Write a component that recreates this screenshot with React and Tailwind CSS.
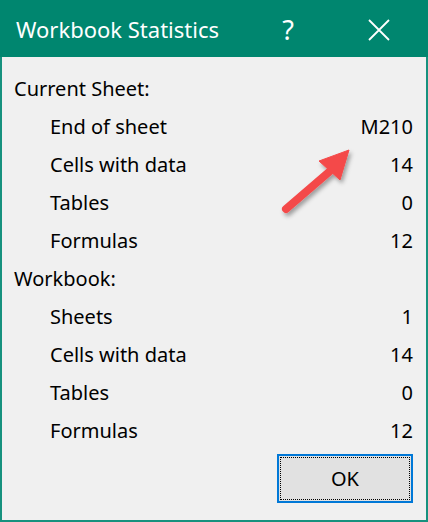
export default function App() {
  const font = { fontFamily: '"Noto Sans", "Open Sans", sans-serif' };
  const Header = ({ children }) => (
    <div className="h-[38px] flex items-center pl-[12px] text-[20px] text-black">{children}</div>
  );
  const Item = ({ label, value }) => (
    <div className="h-[38px] flex items-center justify-between pl-[48px] text-[20px] text-black">
      <span>{label}</span>
      <span>{value}</span>
    </div>
  );
  return (
    <div className="w-[428px] h-[522px] relative border-2 border-[#16917e] bg-[#f0f0f0] flex flex-col" style={font}>
      <div className="h-[55px] -mx-[2px] -mt-[2px] pt-[2px] box-content bg-[#00866f] flex items-center text-white">
        <span className="pl-[16px] text-[22px] flex-1">Workbook Statistics</span>
        <span className="w-[24px] text-center text-[27px] leading-none mr-[68px]">?</span>
        <svg width="22" height="22" viewBox="0 0 22 22" className="mr-[38px]">
          <path d="M1 1 L21 21 M21 1 L1 21" stroke="white" strokeWidth="1.8" />
        </svg>
      </div>
      <div className="flex flex-col pt-[13px] pr-[13px]">
        <Header>Current Sheet:</Header>
        <Item label="End of sheet" value="M210" />
        <Item label="Cells with data" value="14" />
        <Item label="Tables" value="0" />
        <Item label="Formulas" value="12" />
        <Header>Workbook:</Header>
        <Item label="Sheets" value="1" />
        <Item label="Cells with data" value="14" />
        <Item label="Tables" value="0" />
        <Item label="Formulas" value="12" />
        <div className="flex justify-end mt-[4px]">
          <button className="w-[136px] h-[49px] border-2 border-[#0078d7] bg-[#e1e1e1] p-[1px] text-[20px] text-black">
            <div className="w-full h-full border border-dotted border-black flex items-center justify-center">OK</div>
          </button>
        </div>
      </div>
      <svg className="absolute left-0 top-0 pointer-events-none" width="428" height="522" viewBox="0 0 428 522">
        <defs>
          <filter id="sh" x="-20%" y="-20%" width="140%" height="140%">
            <feDropShadow dx="2" dy="3" stdDeviation="2" floodColor="#000" floodOpacity="0.35" />
          </filter>
        </defs>
        <g filter="url(#sh)" fill="#f44a4a" stroke="#f44a4a">
          <line x1="284" y1="207" x2="327" y2="170" strokeWidth="8" strokeLinecap="round" />
          <polygon points="347,148 317,159 338,178" strokeWidth="1" strokeLinejoin="round" />
        </g>
      </svg>
    </div>
  );
}
